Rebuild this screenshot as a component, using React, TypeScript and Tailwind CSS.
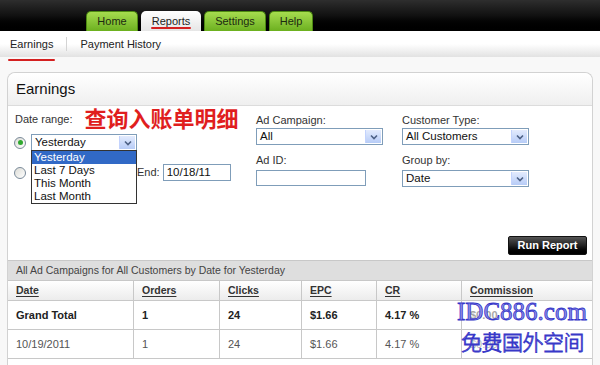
import * as React from "react"

const tabs = [
  { title: "Home", w: "w-[52px]", active: false },
  { title: "Reports", w: "w-[60px]", active: true },
  { title: "Settings", w: "w-[62px]", active: false },
  { title: "Help", w: "w-[44px]", active: false },
]

const cols = [
  { title: "Date", w: "w-[125px]" },
  { title: "Orders", w: "w-[86px]" },
  { title: "Clicks", w: "w-[82px]" },
  { title: "EPC", w: "w-[75px]" },
  { title: "CR", w: "w-[85px]" },
  { title: "Commission", w: "flex-1" },
]

const rows = [
  { bold: true, cells: ["Grand Total", "1", "24", "$1.66", "4.17 %", "$0.00"] },
  { bold: false, cells: ["10/19/2011", "1", "24", "$1.66", "4.17 %", "$0.00"] },
]

function Arrow() {
  return (
    <div className="flex h-full w-[16px] items-center justify-center border-l border-[#c3d3fd] bg-gradient-to-b from-[#e3ebfd] to-[#b7ccf7]">
      <svg width="8" height="6" viewBox="0 0 8 6">
        <path d="M1 1.5 L4 4.5 L7 1.5" fill="none" stroke="#4d6185" strokeWidth="1.6" />
      </svg>
    </div>
  )
}

function Select({ value, w }: { value: string; w: string }) {
  return (
    <div className={`flex h-[17px] items-stretch border border-[#7f9db9] bg-white ${w}`}>
      <span className="flex-1 truncate pl-[3px] leading-[15px] text-[11.5px] text-[#111]">{value}</span>
      <div className="p-px"><Arrow /></div>
    </div>
  )
}

function Radio({ checked }: { checked?: boolean }) {
  return (
    <div className="flex size-[12px] items-center justify-center rounded-full border border-[#7a8a99] bg-gradient-to-br from-[#dcdcd6] to-white">
      {checked && <div className="size-[5px] rounded-full bg-[#2fa82f]" />}
    </div>
  )
}

export default function App() {
  return (
    <div className="relative flex h-[365px] w-[600px] flex-col overflow-hidden bg-[#f8f8f8] text-[#222]" style={{ fontFamily: '"Liberation Sans", Arial, sans-serif' }}>
      {/* top bar with tabs */}
      <div className="flex h-[31px] items-end gap-[3px] bg-gradient-to-b from-[#2e2e2e] via-[#111] to-[#000] pl-[86px]">
        {tabs.map((t) => (
          <div
            key={t.title}
            className={`relative flex h-[20px] items-center justify-center rounded-t-[5px] text-[11px] ${t.w} ${
              t.active
                ? "bg-gradient-to-b from-white to-[#e6e6e6] text-[#222]"
                : "border border-b-0 border-[#4d8a12] bg-gradient-to-b from-[#a6dc4e] to-[#6cb01e] text-[#1c2a10]"
            }`}
          >
            {t.title}
            {t.active && <div className="absolute bottom-[2px] left-[10px] h-[2px] w-[40px] rounded bg-[#d42020]" />}
          </div>
        ))}
      </div>

      {/* sub nav */}
      <div className="flex h-[26px] items-center bg-gradient-to-b from-white via-white to-[#e2e2e2] pl-[10px] text-[11px] text-[#222]">
        <div className="relative">
          Earnings
          <div className="absolute -bottom-[9px] -left-[2px] h-[2px] w-[47px] rounded bg-[#d42020]" />
        </div>
        <div className="mx-[13px] h-[14px] w-px bg-[#d4d4d4]" />
        <div>Payment History</div>
      </div>

      {/* panel */}
      <div className="mx-[7px] mt-[15px] flex flex-1 flex-col rounded-t-[8px] border border-b-0 border-[#d2d2d2] bg-white">
        <div className="flex h-[33px] items-center rounded-t-[8px] border-b border-[#dcdcdc] bg-gradient-to-b from-white to-[#efefef] pl-[8px] text-[15px] text-[#111]">
          Earnings
        </div>

        <div className="flex h-[154px] flex-col">
          <div className="flex text-[11px] text-[#333]">
            {/* date range */}
            <div className="w-[248px] pl-[6px]">
              <div className="flex h-[22px] items-center">
                <span className="ml-[1px] mt-[4px]">Date range:</span>
                <span className="ml-[12px] text-[22px] font-bold leading-none text-[#e01e1e]" style={{ fontFamily: '"Noto Sans CJK SC", sans-serif' }}>
                  查询入账单明细
                </span>
              </div>
              <div className="relative mt-[6px] flex items-center">
                <div className="mr-[5px]"><Radio checked /></div>
                <Select value="Yesterday" w="w-[106px]" />
                <div className="absolute left-[17px] top-[16px] z-10 w-[106px] border border-[#333] bg-white text-[11.5px] leading-[13px] text-[#111]">
                  <div className="bg-[#3169c6] pl-[2px] text-white">Yesterday</div>
                  <div className="pl-[2px]">Last 7 Days</div>
                  <div className="pl-[2px]">This Month</div>
                  <div className="pl-[2px]">Last Month</div>
                </div>
              </div>
              <div className="mt-[13px] flex items-center">
                <div className="mr-[5px]"><Radio /></div>
                <div className="h-[17px] w-[104px]" />
                <span className="ml-[2px]">End:</span>
                <div className="ml-[3px] h-[17px] w-[68px] border border-[#7f9db9] pl-[3px] text-[11.5px] leading-[15px] text-[#111]">10/18/11</div>
              </div>
            </div>

            {/* campaign */}
            <div className="w-[146px] pt-[8px]">
              <div className="leading-[13px]">Ad Campaign:</div>
              <div className="mt-[1px]"><Select value="All" w="w-[127px]" /></div>
              <div className="mt-[9px] leading-[13px]">Ad ID:</div>
              <div className="mt-[3px] h-[16px] w-[110px] border border-[#7f9db9]" />
            </div>

            {/* customer */}
            <div className="pt-[8px]">
              <div className="leading-[13px]">Customer Type:</div>
              <div className="mt-[1px]"><Select value="All Customers" w="w-[127px]" /></div>
              <div className="mt-[9px] leading-[13px]">Group by:</div>
              <div className="mt-[3px]"><Select value="Date" w="w-[127px]" /></div>
            </div>
          </div>

          <div className="mt-auto mb-[5px] flex justify-end pr-[5px]">
            <div className="flex h-[19px] w-[79px] items-center justify-center rounded-[2px] border border-[#111] bg-gradient-to-b from-[#555] via-[#222] to-[#000] text-[11px] font-bold text-white">
              Run Report
            </div>
          </div>
        </div>

        {/* table */}
        <div className="flex h-[21px] items-center border-y border-[#c8c8c8] bg-[#dedede] pl-[8px] text-[10.5px] text-[#444]">
          All Ad Campaigns for All Customers by Date for Yesterday
        </div>
        <div className="flex h-[20px] border-b border-[#c8c8c8] bg-gradient-to-b from-white to-[#ececec] text-[10.5px] font-bold text-[#333]">
          {cols.map((c, i) => (
            <div key={c.title} className={`flex items-center pl-[8px] ${c.w} ${i > 0 ? "border-l border-[#c8c8c8]" : ""}`}>
              <span className="underline underline-offset-2">{c.title}</span>
            </div>
          ))}
        </div>
        {rows.map((r) => (
          <div key={r.cells[0]} className={`flex h-[29px] border-b border-[#c8c8c8] text-[11px] ${r.bold ? "font-bold text-[#222]" : "text-[#555]"}`}>
            {r.cells.map((cell, i) => (
              <div key={i} className={`flex items-center pl-[8px] ${cols[i].w} ${i > 0 ? "border-l border-[#c8c8c8]" : ""}`}>
                {i === 5 ? <span className="opacity-40">{cell}</span> : cell}
              </div>
            ))}
          </div>
        ))}
      </div>

      {/* watermark */}
      <div className="absolute left-[457px] top-[299px] text-[25px] leading-none text-[#8f8fe8] [-webkit-text-stroke:0.8px_#3434c8]" style={{ fontFamily: '"Liberation Serif", serif' }}>
        IDC886.com
      </div>
      <div className="absolute left-[461px] top-[331px] text-[21px] font-light leading-none tracking-[-0.5px] text-white [-webkit-text-stroke:0.9px_#3838c8]" style={{ fontFamily: '"Noto Sans CJK SC", sans-serif' }}>
        免费国外空间
      </div>
    </div>
  )
}
